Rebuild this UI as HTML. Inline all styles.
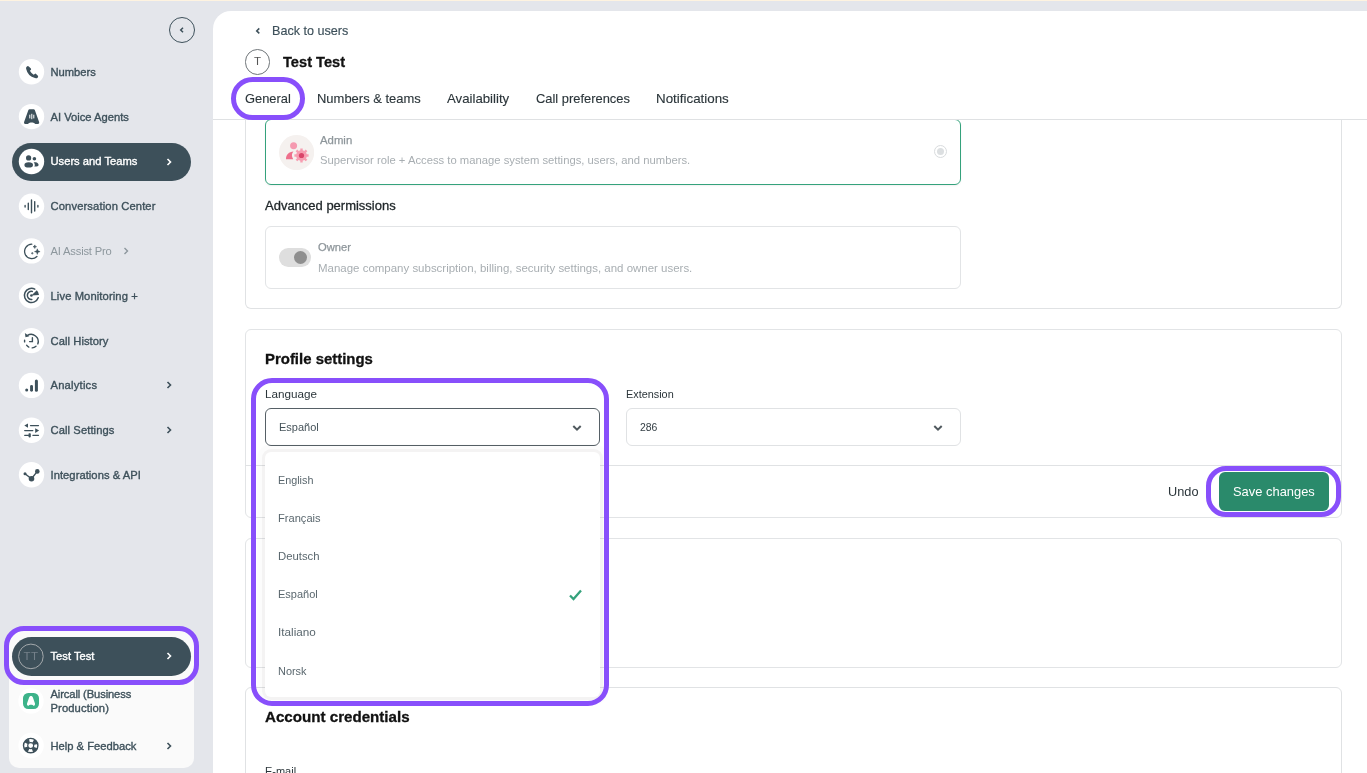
<!DOCTYPE html>
<html lang="en">
<head>
<meta charset="utf-8">
<title>Test Test - Users</title>
<style>
*{box-sizing:border-box;margin:0;padding:0}
html,body{width:1367px;height:773px;overflow:hidden}
body{font-family:"Liberation Sans",sans-serif;background:#e4e6eb;color:#3d505a;position:relative;font-size:12px;will-change:transform}
.abs{position:absolute}
.topstrip{left:0;top:0;width:1367px;height:1px;background:#fef3e0}
/* sidebar */
.collapse{left:169px;top:17px;width:26px;height:26px;border:1px solid #3d505a;border-radius:50%}
.nav{left:12px;width:179px;height:38px;border-radius:19px}
.nav .ic{position:absolute;left:6.7px;top:6.2px;width:25.6px;height:25.6px;border-radius:50%;background:#fff;box-shadow:0 0 1px rgba(255,255,255,.6)}
.nav .ico{position:absolute;left:0;top:0;width:38px;height:38px;overflow:visible}
.nav .ic svg{position:absolute;left:4.8px;top:4.8px;width:16px;height:16px;overflow:visible}
.nav .lb{position:absolute;left:38.5px;top:0;line-height:38px;font-size:11.2px;font-weight:normal;color:#3d505a;white-space:nowrap;letter-spacing:0;-webkit-text-stroke:0.35px currentColor}
.nav .ch{position:absolute;left:153.400px;top:14px;width:8px;height:10px}
.nav.active{background:#3d505a}
.nav.active .lb{color:#fff}
.nav.up .lb{top:-1px}
.nav.dim .lb{color:#8d979d;-webkit-text-stroke:0}
.botcard{left:9px;top:630px;width:185px;height:138px;background:#fafafa;border-radius:10px}
.hl{border:5px solid #884ffb;position:absolute}
/* main */
.main{left:213px;top:11px;width:1154px;height:762px;background:#fff;border-top-left-radius:18px;overflow:hidden}
.tabline{left:213px;top:119px;width:1154px;height:1px;background:#dfe1e3}
.back{left:271px;top:23px;font-size:13px;color:#3d505a;line-height:16px}
.avatar{left:244.9px;top:49.4px;width:25.2px;height:25.2px;border:1px solid #6f7579;border-radius:50%;text-align:center;line-height:23.5px;font-size:11.5px;color:#555}
.title{left:283px;top:52px;font-size:15px;letter-spacing:-0.1px;font-weight:bold;color:#111;line-height:20px}
.tab{top:90px;font-size:13px;line-height:17px;color:#2a3439;white-space:nowrap}
.card{border:1px solid #e2e4e6;border-radius:6px;background:#fff}
.h2{font-size:15px;font-weight:bold;color:#111;line-height:18px}
.lbl{font-size:11.5px;color:#2a3439;line-height:14px}
.sel{border:1px solid #e0e2e4;border-radius:6px;height:38px;background:#fff}
.sel span{position:absolute;left:13px;top:0;line-height:36px;font-size:11.5px;color:#3d505a}
.sel svg{position:absolute;right:17.500px;top:14.500px;width:10px;height:8px}
.menu{left:265px;top:452px;width:335px;height:245px;background:#fff;border-radius:6px;box-shadow:0 0 0 3px rgba(70,50,50,.042),0 0 0 8px rgba(0,0,0,.01)}
.opt{left:278px;font-size:11.5px;color:#4b5a62;line-height:14px}
.gray{color:#9aa2a7}
.t{position:absolute;white-space:nowrap;line-height:20px;transform-origin:0 0}
</style>
</head>
<body>
<div class="abs topstrip"></div>

<!-- SIDEBAR -->
<div class="abs collapse"><svg class="abs" style="left:9px;top:8px" width="6" height="8" viewBox="0 0 6 8"><path d="M4 1.700 L1.700 4 L4 6.300" fill="none" stroke="#3d505a" stroke-width="1.500"/></svg></div>

<div class="abs nav" style="top:53px"><svg class="ico" viewBox="0 0 38 38"><circle cx="19.5" cy="18.8" r="12.700" fill="#fff"/><g transform="translate(11.5 10.8)"><path fill="#3d505a" d="M3.400 2.700Q4.400 1.900 5.300 2.700L7.400 4.600Q7.900 5.400 7.300 6.100L6.400 7Q7.700 9.500 10.200 10.900L11.200 10.100Q11.900 9.500 12.600 10.100L14.400 11.900Q15 12.700 14.300 13.600Q13.200 14.800 11.500 14.300Q4.200 12.400 2.600 5Q2.300 3.500 3.400 2.700Z"/></g></svg><div class="lb">Numbers</div></div>
<div class="abs nav" style="top:98px"><svg class="ico" viewBox="0 0 38 38"><circle cx="19.5" cy="18.6" r="12.700" fill="#fff"/><g transform="translate(11.6 10.9)"><path fill="#3d505a" d="M6 .3h4c.6 0 1 .3 1.200 .9l4.300 12c.3 1-.2 2-1.200 2h-1.800c-.6 0-1-.2-1.400-.6c-.8-.8-1.800-1.100-3.100-1.100s-2.300 .3-3.100 1.100c-.4 .4-.8 .6-1.400 .6h-1.800c-1 0-1.500-1-1.200-2l4.300-12c.2-.6 .6-.9 1.200-.9z"/><rect x="5.700" y="5.800" width="1" height="3.700" fill="#fff"/><rect x="7.700" y="4.900" width="1" height="5.400" fill="#fff"/><rect x="9.700" y="5.800" width="1" height="3.700" fill="#fff"/></g></svg><div class="lb">AI Voice Agents</div></div>
<div class="abs nav active up" style="top:143px"><svg class="ico" viewBox="0 0 38 38"><circle cx="19.5" cy="18.5" r="12.700" fill="#fff"/><g transform="translate(11.5 10.5)"><g fill="#3d505a"><circle cx="5.100" cy="4.400" r="2.600"/><circle cx="10.900" cy="5.300" r="1.800"/><ellipse cx="5.200" cy="11.400" rx="4.300" ry="2.700"/><path d="M10.100 8.700h2c1.800 0 3 1.500 3 2.700c0 1-1.500 1.700-3.600 1.700h-.8c.4-.5 .6-1.100 .6-1.700c0-1.100-.5-2-1.200-2.700z"/></g></g></svg><div class="lb">Users and Teams</div><svg class="ch" viewBox="0 0 8 10"><path d="M2.5 2 L5.5 5 L2.5 8" fill="none" stroke="#fff" stroke-width="1.6"/></svg></div>
<div class="abs nav" style="top:187px"><svg class="ico" viewBox="0 0 38 38"><circle cx="19.5" cy="19.3" r="12.700" fill="#fff"/><g transform="translate(11.5 11.3)"><g stroke="#3d505a" stroke-width="1.400" stroke-linecap="round" fill="none"><path d="M1.600 7.200v1.600M4.800 4.900v6.400M8 1.600v12.900M11.200 3.300v9.400M14.400 7.200v1.600"/></g></g></svg><div class="lb" style="letter-spacing:0.13px">Conversation Center</div></div>
<div class="abs nav dim" style="top:232px"><svg class="ico" viewBox="0 0 38 38"><circle cx="19.5" cy="18.9" r="12.700" fill="#fff"/><g transform="translate(11.5 10.9)"><g><path d="M8.300 1.300A7.200 7.200 0 1 0 13.400 13.600" fill="none" stroke="#3d505a" stroke-width="1.300" stroke-linecap="round"/><g fill="#3d505a" stroke="#3d505a" stroke-width=".5" stroke-linejoin="round"><path d="M11.30 2.00L11.78 3.32L13.10 3.80L11.78 4.28L11.30 5.60L10.82 4.28L9.50 3.80L10.82 3.32Z"/><path d="M13.80 5.90L14.55 7.95L16.60 8.70L14.55 9.45L13.80 11.50L13.05 9.45L11.00 8.70L13.05 7.95Z"/><path d="M8.80 9.40L9.07 10.13L9.80 10.40L9.07 10.67L8.80 11.40L8.53 10.67L7.80 10.40L8.53 10.13Z"/></g></g></g></svg><div class="lb" style="letter-spacing:-0.18px">AI Assist Pro</div><svg class="ch" style="left:110px" viewBox="0 0 8 10"><path d="M2.5 2 L5.5 5 L2.5 8" fill="none" stroke="#8d979d" stroke-width="1.4"/></svg></div>
<div class="abs nav" style="top:277px"><svg class="ico" viewBox="0 0 38 38"><circle cx="19.5" cy="18.7" r="12.700" fill="#fff"/><g transform="translate(11.5 10.7)"><g><g fill="none" stroke="#3d505a" stroke-width="1.500" stroke-linecap="round"><path d="M11.300 1.400A7.100 7.100 0 1 0 14.700 10.100"/><path d="M8.800 3.700A4.100 4.100 0 1 0 8.300 11.800"/></g><g fill="#3d505a"><circle cx="7.900" cy="7.800" r="1.300"/><path d="M7.900 7.800L13.300 2.600A7.500 7.500 0 0 1 15.500 7.300z"/></g></g></g></svg><div class="lb" style="letter-spacing:0.11px">Live Monitoring +</div></div>
<div class="abs nav" style="top:322px"><svg class="ico" viewBox="0 0 38 38"><circle cx="19.5" cy="18.6" r="12.700" fill="#fff"/><g transform="translate(11.6 11)"><g><g fill="none" stroke="#3d505a" stroke-width="1.400" stroke-linecap="round"><path d="M3.600 2.600A7.100 7.100 0 0 1 14.200 10.900"/><path d="M12.400 13.300A7.100 7.100 0 0 1 8.600 14.900M5.200 14.100A7.100 7.100 0 0 1 3 12.200M1 8.900V7.300"/><path d="M8.800 4.700V8.600H6"/></g><path fill="#3d505a" d="M1.300 .1L1.900 4.300L5.700 3.300z"/></g></g></svg><div class="lb" style="letter-spacing:0.07px">Call History</div></div>
<div class="abs nav" style="top:366px"><svg class="ico" viewBox="0 0 38 38"><circle cx="19.5" cy="19.4" r="12.700" fill="#fff"/><g transform="translate(11.5 11.4)"><g fill="#3d505a"><circle cx="3.200" cy="12.700" r="1.500"/><rect x="6.600" y="7.500" width="2.900" height="6.800" rx="1.450"/><rect x="11.400" y="2" width="3" height="12.300" rx="1.500"/></g></g></svg><div class="lb" style="letter-spacing:0.22px">Analytics</div><svg class="ch" viewBox="0 0 8 10"><path d="M2.5 2 L5.5 5 L2.5 8" fill="none" stroke="#3d505a" stroke-width="1.6"/></svg></div>
<div class="abs nav" style="top:411px"><svg class="ico" viewBox="0 0 38 38"><circle cx="19.5" cy="19.2" r="12.700" fill="#fff"/><g transform="translate(11.5 11.5)"><g fill="none" stroke="#3d505a" stroke-width="1.300" stroke-linecap="round"><path d="M7 3.100H15M1.200 8.100H9.300M1.200 12.800H5M9.400 12.800H15"/></g><g fill="#3d505a"><path d="M.8 3.100L4.500 .9V5.300z"/><path d="M15.600 8.100L11.700 5.800V10.400z"/><rect x="5" y="10.700" width="2.300" height="4.200" rx=".8"/></g></g></svg><div class="lb" style="letter-spacing:0.09px">Call Settings</div><svg class="ch" viewBox="0 0 8 10"><path d="M2.5 2 L5.5 5 L2.5 8" fill="none" stroke="#3d505a" stroke-width="1.6"/></svg></div>
<div class="abs nav" style="top:456px"><svg class="ico" viewBox="0 0 38 38"><circle cx="19.5" cy="18.8" r="12.700" fill="#fff"/><g transform="translate(11.5 10.8)"><g fill="#3d505a"><circle cx="8" cy="11.900" r="2.800"/><circle cx="13.800" cy="4.600" r="2.300"/><circle cx="1.500" cy="6.900" r="1.500"/></g><path d="M1.500 6.900L8 11.900L13.800 4.600" fill="none" stroke="#3d505a" stroke-width="1.400"/></g></svg><div class="lb" style="letter-spacing:0.05px">Integrations &amp; API</div></div>

<div class="abs botcard"></div>
<div class="abs nav active" style="top:637px;height:39px;border-radius:19.500px"><svg class="ico" viewBox="0 0 38 38"><circle cx="18.900" cy="19.400" r="12.300" fill="none" stroke="#a4a9ac" stroke-width="1"/><text x="18.900" y="23.400" text-anchor="middle" font-family="Liberation Sans, sans-serif" font-size="11.500" fill="#74808a" letter-spacing=".3">TT</text></svg><div class="lb">Test Test</div><svg class="ch" viewBox="0 0 8 10"><path d="M2.5 2 L5.5 5 L2.5 8" fill="none" stroke="#fff" stroke-width="1.6"/></svg></div>
<div class="hl" style="left:4px;top:626px;width:195px;height:59px;border-radius:20px"></div>
<div class="abs nav" style="top:682px"><svg class="ico" viewBox="0 0 38 38"><circle cx="19.0" cy="18.9" r="12.700" fill="#fff"/><g transform="translate(11.0 10.9)"><rect x="0" y="0" width="16" height="16" rx="5.200" fill="#3db38a"/><path fill="#fff" d="M8 3.200c.9 0 1.500 .5 1.900 1.500l2 5.600c.3 .9 .1 1.700-.5 2.200l-.6 .5c-.6-.7-1.500-1.200-2.800-1.200s-2.200 .5-2.800 1.200l-.6-.5c-.6-.5-.8-1.300-.5-2.200l2-5.600c.4-1 1-1.500 1.900-1.500z"/></g></svg><div class="lb" style="line-height:14px;top:5px;white-space:normal;width:110px;letter-spacing:-0.12px">Aircall (Business <span style="letter-spacing:0.120px">Production)</span></div></div>
<div class="abs nav" style="top:727px"><svg class="ico" viewBox="0 0 38 38"><circle cx="19.1" cy="18.5" r="12.700" fill="#fff"/><g transform="translate(10.700 10.600)"><circle cx="8" cy="8" r="7.200" fill="#fff" stroke="#3d505a" stroke-width="1.400"/><circle cx="8" cy="8" r="5" fill="none" stroke="#3d505a" stroke-width="4.400" stroke-dasharray="3.930 3.930" stroke-dashoffset="-1.960"/><circle cx="8" cy="8" r="3" fill="#fff" stroke="#3d505a" stroke-width="1.200"/></g></svg><div class="lb">Help &amp; Feedback</div><svg class="ch" viewBox="0 0 8 10"><path d="M2.5 2 L5.5 5 L2.5 8" fill="none" stroke="#3d505a" stroke-width="1.6"/></svg></div>

<!-- MAIN -->
<div class="abs main"></div>
<svg class="abs" style="left:255px;top:27px" width="6" height="8" viewBox="0 0 6 8"><path d="M4.300 1.400 L1.700 3.900 L4.300 6.400" fill="none" stroke="#3d505a" stroke-width="1.500"/></svg>
<div class="abs avatar">T</div>

<!-- card 1 -->
<div class="abs" style="left:245px;top:120px;width:1097px;height:189px;border:1px solid #e0e2e4;border-top:none;border-radius:0 0 6px 6px"></div>
<div class="abs" style="left:265px;top:119px;width:696px;height:66px;border:1px solid #35a27c;border-radius:6px;box-shadow:0 1px 2px rgba(0,0,0,.06)"></div>
<svg class="abs" style="left:279px;top:134.500px" width="35.200" height="35.200" viewBox="0 0 35.200 35.200"><circle cx="17.600" cy="17.600" r="17.600" fill="#f5f1ef"/><circle cx="14.600" cy="10.700" r="3.500" fill="#f59ab0"/><path d="M7 24.300C7 19.800 10 16.800 14.500 16.600C13 18 12.600 20 13.200 21.900L14.200 24.300Z" fill="#ee6f8c"/><path d="M29.60 19.28 L29.60 21.72 L27.77 21.68 L27.06 23.39 L28.38 24.66 L26.66 26.38 L25.39 25.06 L23.68 25.77 L23.72 27.60 L21.28 27.60 L21.32 25.77 L19.61 25.06 L18.34 26.38 L16.62 24.66 L17.94 23.39 L17.23 21.68 L15.40 21.72 L15.40 19.28 L17.23 19.32 L17.94 17.61 L16.62 16.34 L18.34 14.62 L19.61 15.94 L21.32 15.23 L21.28 13.40 L23.72 13.40 L23.68 15.23 L25.39 15.94 L26.66 14.62 L28.38 16.34 L27.06 17.61 L27.77 19.32Z" fill="#f79db1"/><circle cx="22.5" cy="20.5" r="2.600" fill="#d94469"/></svg>
<div class="abs" style="left:934px;top:145px;width:13px;height:13px;border:1px solid #d9dcde;border-radius:50%"><div style="position:absolute;left:2px;top:2px;width:7px;height:7px;border-radius:50%;background:#dcdfe1"></div></div>
<div class="abs card" style="left:265px;top:226px;width:696px;height:63px"></div>
<div class="abs" style="left:279px;top:248.300px;width:32px;height:18.400px;border-radius:9.200px;background:#dedede"><div style="position:absolute;left:14.600px;top:2.600px;width:13.200px;height:13.200px;border-radius:50%;background:#8f8f8f"></div></div>

<div class="abs tabline"></div>
<!-- card 2 profile -->
<div class="abs card" style="left:245px;top:329px;width:1097px;height:189px"></div>
<div class="abs" style="left:245px;top:465px;width:1097px;height:1px;background:#e0e2e4"></div>
<div class="abs sel" style="left:265px;top:408px;width:335px;border-color:#566066"><svg viewBox="0 0 10 8"><path d="M1.300 2 L5 5.600 L8.700 2" fill="none" stroke="#50595e" stroke-width="2"/></svg></div>
<div class="abs sel" style="left:626px;top:408px;width:335px"><svg viewBox="0 0 10 8"><path d="M1.300 2 L5 5.600 L8.700 2" fill="none" stroke="#50595e" stroke-width="2"/></svg></div>
<div class="abs" style="left:1219px;top:472px;width:110px;height:39px;border-radius:6px;background:#2a8a6b;color:#fff;"></div>
<div class="hl" style="left:1206px;top:466px;width:135px;height:51px;border-radius:20px"></div>

<!-- card 3 -->
<div class="abs card" style="left:245px;top:538px;width:1097px;height:130px"></div>
<!-- card 4 -->
<div class="abs" style="left:245px;top:687px;width:1097px;height:100px;border:1px solid #e0e2e4;border-radius:6px"></div>

<!--TXT-->
<div class="t" style="left:271.7px;top:20.5px;font-size:12.2px;color:#3d505a;transform:scaleX(1.0333);-webkit-text-stroke:0.15px currentColor">Back to users</div>
<div class="t" style="left:283.3px;top:51.5px;font-size:15px;color:#111;transform:scaleX(0.9758);font-weight:bold;-webkit-text-stroke:0.3px currentColor">Test Test</div>
<div class="t" style="left:244.8px;top:88.5px;font-size:12.4px;color:#2b353a;transform:scaleX(1.0387);-webkit-text-stroke:0.12px currentColor">General</div>
<div class="t" style="left:317.0px;top:88.5px;font-size:12.4px;color:#2b353a;transform:scaleX(1.0468);-webkit-text-stroke:0.12px currentColor">Numbers &amp; teams</div>
<div class="t" style="left:447.1px;top:88.5px;font-size:12.4px;color:#2b353a;transform:scaleX(1.0667);-webkit-text-stroke:0.12px currentColor">Availability</div>
<div class="t" style="left:535.8px;top:88.5px;font-size:12.4px;color:#2b353a;transform:scaleX(1.0406);-webkit-text-stroke:0.12px currentColor">Call preferences</div>
<div class="t" style="left:656.1px;top:88.5px;font-size:12.4px;color:#2b353a;transform:scaleX(1.0785);-webkit-text-stroke:0.12px currentColor">Notifications</div>
<div class="t" style="left:320.2px;top:130px;font-size:11px;color:#8e969b;transform:scaleX(1.0325);-webkit-text-stroke:0.25px currentColor">Admin</div>
<div class="t" style="left:320.2px;top:150px;font-size:11px;color:#a8aeb2;transform:scaleX(1.0236)">Supervisor role + Access to manage system settings, users, and numbers.</div>
<div class="t" style="left:264.9px;top:195.5px;font-size:12.3px;color:#1f2629;transform:scaleX(1.0564);-webkit-text-stroke:0.3px currentColor">Advanced permissions</div>
<div class="t" style="left:317.6px;top:237px;font-size:11px;color:#8e969b;transform:scaleX(1.0152);-webkit-text-stroke:0.25px currentColor">Owner</div>
<div class="t" style="left:317.6px;top:257.5px;font-size:11px;color:#a8aeb2;transform:scaleX(1.0429)">Manage company subscription, billing, security settings, and owner users.</div>
<div class="t" style="left:264.9px;top:348.5px;font-size:15px;color:#111;transform:scaleX(0.9958);font-weight:bold;-webkit-text-stroke:0.3px currentColor">Profile settings</div>
<div class="t" style="left:264.9px;top:383.5px;font-size:11px;color:#2b353a;transform:scaleX(1.0622)">Language</div>
<div class="t" style="left:626.3px;top:383.5px;font-size:11px;color:#2b353a;transform:scaleX(0.9873)">Extension</div>
<div class="t" style="left:278.7px;top:417px;font-size:11.3px;color:#46535a;transform:scaleX(0.9748)">Español</div>
<div class="t" style="left:639.9px;top:417px;font-size:11.2px;color:#333e44;transform:scaleX(0.9319)">286</div>
<div class="t" style="left:1167.9px;top:482px;font-size:12.6px;color:#2b353a;transform:scaleX(1.0130)">Undo</div>
<div class="t" style="left:1233.3px;top:482px;font-size:12.6px;color:#fff;transform:scaleX(1.0247)">Save changes</div>
<div class="t" style="left:264.9px;top:707px;font-size:15px;color:#111;transform:scaleX(1.0085);font-weight:bold;-webkit-text-stroke:0.3px currentColor">Account credentials</div>
<div class="t" style="left:264.9px;top:761px;font-size:11px;color:#2b353a;transform:scaleX(0.9977)">E-mail</div>
<!--/TXT-->
<!-- dropdown -->
<div class="abs menu"></div>
<!--OPT-->
<div class="t" style="left:277.9px;top:469.5px;font-size:11.2px;color:#5a676e;transform:scaleX(0.9645)">English</div>
<div class="t" style="left:277.9px;top:507.5px;font-size:11.2px;color:#5a676e;transform:scaleX(0.9929)">Français</div>
<div class="t" style="left:277.9px;top:545.5px;font-size:11.2px;color:#5a676e;transform:scaleX(1.0135)">Deutsch</div>
<div class="t" style="left:277.9px;top:584px;font-size:11.2px;color:#5a676e;transform:scaleX(0.9842)">Español</div>
<div class="t" style="left:277.9px;top:622px;font-size:11.2px;color:#5a676e;transform:scaleX(1.0477)">Italiano</div>
<div class="t" style="left:277.9px;top:660.5px;font-size:11.2px;color:#5a676e;transform:scaleX(0.9754)">Norsk</div>
<!--/OPT-->
<svg class="abs" style="left:568px;top:588px" width="15" height="13" viewBox="0 0 15 13"><path d="M2 7.5 L5.5 11 L13 2.5" fill="none" stroke="#35a27c" stroke-width="2.300"/></svg>
<div class="hl" style="left:251px;top:378px;width:358px;height:328px;border-radius:21px"></div>
<div class="hl" style="left:231px;top:77px;width:74px;height:43px;border-radius:21.500px"></div>
</body>
</html>
